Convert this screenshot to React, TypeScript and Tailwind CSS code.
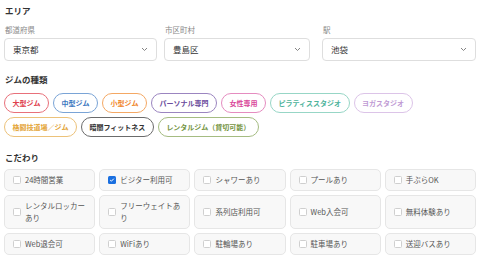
import React from 'react';

const font = { fontFamily: '"Noto Sans CJK JP", "Noto Sans", sans-serif' };

const selects = [
    { label: '都道府県', value: '東京都', w: 'w-[153px]' },
    { label: '市区町村', value: '豊島区', w: 'w-[146px]' },
    { label: '駅', value: '池袋', w: 'w-[154px]' },
];

const gymTypes = [
    [
        { name: '大型ジム', cls: 'text-[#e0404c] border-[#e8707a]' },
        { name: '中型ジム', cls: 'text-[#3d78c0] border-[#7aa4d6]' },
        { name: '小型ジム', cls: 'text-[#f0862a] border-[#f4a864]' },
        { name: 'パーソナル専門', cls: 'text-[#6a4c9c] border-[#9b85c0]' },
        { name: '女性専用', cls: 'text-[#d9479a] border-[#e58cc0]' },
        { name: 'ピラティススタジオ', cls: 'text-[#4db39b] border-[#97d6c6]' },
        { name: 'ヨガスタジオ', cls: 'text-[#c09ad4] border-[#dcc4e8]' },
    ],
    [
        { name: '格闘技道場／ジム', cls: 'text-[#e3a436] border-[#ecc27a]' },
        { name: '暗闇フィットネス', cls: 'text-[#333333] border-[#6b6b6b]' },
        { name: 'レンタルジム（貸切可能）', cls: 'text-[#74943f] border-[#a5bc82]' },
    ],
];

const options = [
    '24時間営業', 'ビジター利用可', 'シャワーあり', 'プールあり', '手ぶらOK',
    'レンタルロッカーあり', 'フリーウェイトあり', '系列店利用可', 'Web入会可', '無料体験あり',
    'Web退会可', 'WiFiあり', '駐輪場あり', '駐車場あり', '送迎バスあり',
];

const Chevron = () => (
    <svg width="7" height="5" viewBox="0 0 7 5" fill="none">
        <path d="M1 1l2.5 2.5L6 1" stroke="#777" strokeWidth="0.9" />
    </svg>
);

export default function App() {
    return (
        <div className="w-[480px] h-[261px] bg-white overflow-hidden px-[4px] pt-[4px]" style={font}>
            <h2 className="text-[8.5px] font-bold text-[#333] leading-[12px] pl-[1px]">エリア</h2>
            <div className="flex mt-[9px]">
                {selects.map((s, i) => (
                    <div key={s.label} className={`${s.w} ${i === 1 ? 'ml-[7px]' : ''} ${i === 2 ? 'ml-[12px]' : ''}`}>
                        <div className="text-[7.5px] text-[#888] leading-[10px] h-[11px] pl-[1px]">{s.label}</div>
                        <div className="mt-[2px] h-[23px] border border-[#dedede] rounded-[4px] bg-white flex items-center justify-between pl-[8px] pr-[8px]">
                            <span className="text-[8.5px] text-[#333]">{s.value}</span>
                            <Chevron />
                        </div>
                    </div>
                ))}
            </div>

            <h2 className="mt-[12px] text-[8.5px] font-bold text-[#333] leading-[12px] pl-[1px]">ジムの種類</h2>
            <div className="mt-[8px] flex flex-col gap-[4px]">
                {gymTypes.map((row, ri) => (
                    <div key={ri} className="flex gap-[4px]">
                        {row.map(g => (
                            <span key={g.name} className={`h-[20px] flex items-center px-[7.5px] rounded-full border bg-white text-[7px] font-bold ${g.cls}`}>
                                {g.name}
                            </span>
                        ))}
                    </div>
                ))}
            </div>

            <h2 className="mt-[14px] text-[8.5px] font-bold text-[#333] leading-[12px] pl-[1px]">こだわり</h2>
            <div className="mt-[6px] grid grid-cols-5 gap-[4px] w-[472px]">
                {options.map(o => {
                    const checked = o === 'ビジター利用可';
                    return (
                        <label key={o} className="flex items-center gap-[4px] border border-[#e6e6e6] bg-[#f8f8f8] rounded-[5px] pl-[8px] pr-[8px] py-[4px]">
                            {checked ? (
                                <span className="w-[8px] h-[8px] shrink-0 rounded-[1.5px] bg-[#1a6fe0] flex items-center justify-center">
                                    <svg width="6" height="6" viewBox="0 0 6 6"><path d="M1.2 3.1l1.2 1.1L4.8 1.7" stroke="#fff" strokeWidth="1" fill="none" /></svg>
                                </span>
                            ) : (
                                <span className="w-[8px] h-[8px] shrink-0 rounded-[1.5px] border border-[#cfcfcf] bg-white" />
                            )}
                            <span className="text-[7.5px] leading-[12px] text-[#555]">{o}</span>
                        </label>
                    );
                })}
            </div>
        </div>
    );
}
